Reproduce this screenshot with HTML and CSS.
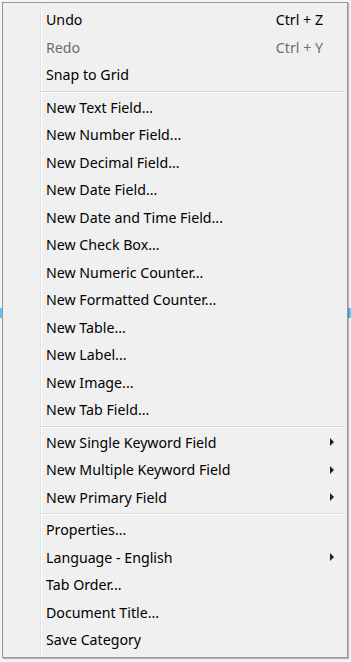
FILE: index.html
```html
<!DOCTYPE html>
<html lang="en">

<head>
    <meta charset="UTF-8">
    <meta name="viewport" content="width=device-width, initial-scale=1.0">
    <title>Context Menu</title>
    <link rel="stylesheet" href="styles.css">
</head>

<body>
    <div class="menu">
        <div class="menu-list">
            <div class="item"><span class="label">Undo</span><span class="shortcut">Ctrl + Z</span></div>
            <div class="item disabled"><span class="label">Redo</span><span class="shortcut">Ctrl + Y</span></div>
            <div class="item"><span class="label">Snap to Grid</span></div>
            <div class="separator"></div>
            <div class="item"><span class="label">New Text Field...</span></div>
            <div class="item"><span class="label">New Number Field...</span></div>
            <div class="item"><span class="label">New Decimal Field...</span></div>
            <div class="item"><span class="label">New Date Field...</span></div>
            <div class="item"><span class="label">New Date and Time Field...</span></div>
            <div class="item"><span class="label">New Check Box...</span></div>
            <div class="item"><span class="label">New Numeric Counter...</span></div>
            <div class="item"><span class="label">New Formatted Counter...</span></div>
            <div class="item"><span class="label">New Table...</span></div>
            <div class="item"><span class="label">New Label...</span></div>
            <div class="item"><span class="label">New Image...</span></div>
            <div class="item"><span class="label">New Tab Field...</span></div>
            <div class="separator"></div>
            <div class="item sub"><span class="label">New Single Keyword Field</span><span class="arrow"></span></div>
            <div class="item sub"><span class="label">New Multiple Keyword Field</span><span class="arrow"></span></div>
            <div class="item sub"><span class="label">New Primary Field</span><span class="arrow"></span></div>
            <div class="separator"></div>
            <div class="item"><span class="label">Properties...</span></div>
            <div class="item sub"><span class="label">Language - English</span><span class="arrow"></span></div>
            <div class="item"><span class="label">Tab Order...</span></div>
            <div class="item"><span class="label">Document Title...</span></div>
            <div class="item"><span class="label">Save Category</span></div>
        </div>
    </div>
</body>
</html>
```

FILE: styles.css
```css
body {
    font-family: "Noto Sans", "Open Sans", sans-serif;
    font-size: 14.2px;
    color: #000;
    margin: 0;
    padding: 2px;
    background-color: #f4f4f4;
    background-image: linear-gradient(to bottom, transparent 308px, #5ec4f0 308px, #5ec4f0 318px, transparent 318px);
    height: 662px;
    box-sizing: border-box;
}

.menu {
    width: 346px;
    box-sizing: border-box;
    background-color: #f0f0f0;
    border: 1px solid #979797;
    padding: 3px 2px;
    box-shadow: 1px 1px 1px rgba(0, 0, 0, 0.25);
}

.menu-list {
    background-image: linear-gradient(to right, transparent 35px, #e2e3e3 35px, #e2e3e3 36px, #fff 36px, #fff 37px, transparent 37px);
}

.item {
    display: flex;
    align-items: center;
    height: 27.5px;
    padding-left: 41px;
    padding-right: 22px;
    white-space: nowrap;
}

.item.disabled {
    color: #6d6d6d;
}

.label {
    flex: 1;
}

.shortcut {
    text-align: right;
}

.item.sub {
    padding-right: 11px;
}

.arrow {
    width: 0;
    height: 0;
    border-top: 4px solid transparent;
    border-bottom: 4px solid transparent;
    border-left: 4px solid #222;
}

.separator {
    height: 5px;
    margin-left: 35px;
    box-sizing: border-box;
    padding-top: 2px;
}

.separator::before {
    content: "";
    display: block;
    height: 1px;
    background-color: #d7d7d7;
    border-bottom: 1px solid #fff;
}
```
